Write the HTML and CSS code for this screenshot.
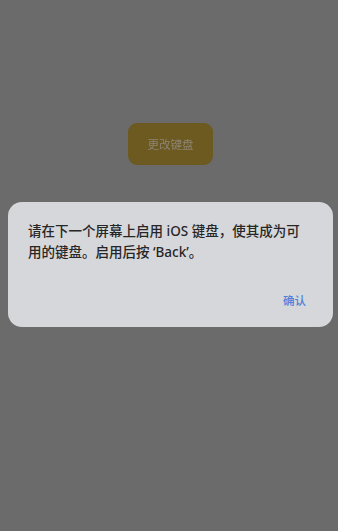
FILE: index.html
```html
<!DOCTYPE html>
<html lang="zh">
<head>
<meta charset="utf-8">
<link rel="stylesheet" href="styles.css">
</head>
<body>
<div class="screen">
  <div class="change-btn">更改键盘</div>
  <div class="dialog">
    <p class="msg">请在下一个屏幕上启用 iOS 键盘，使其成为可用的键盘。启用后按 ‘Back’。</p>
    <div class="actions"><span class="ok">确认</span></div>
  </div>
</div>
</body>
</html>
```
FILE: styles.css
```css
html, body {
  margin: 0;
  padding: 0;
}
body {
  background: #6b6b6b;
  font-family: "Noto Sans", "Noto Sans CJK SC", sans-serif;
}
.screen {
  width: 338px;
  height: 531px;
  display: flex;
  flex-direction: column;
  align-items: center;
  padding-top: 123px;
  box-sizing: border-box;
}
.change-btn {
  width: 85px;
  height: 42px;
  margin-left: 3px;
  border-radius: 9px;
  background: #6d5a20;
  color: #8c8372;
  font-size: 11.5px;
  display: flex;
  align-items: center;
  justify-content: center;
  filter: blur(0.4px);
}
.dialog {
  margin-top: 37px;
  width: 325px;
  height: 125px;
  margin-left: 3px;
  box-sizing: border-box;
  background: #d6d7db;
  border-radius: 14px;
  padding: 19px 20px 0 20px;
  display: flex;
  flex-direction: column;
}
.msg {
  margin: 0;
  font-size: 13.5px;
  line-height: 21px;
  font-weight: 500;
  color: #262626;
}
.actions {
  margin-top: auto;
  display: flex;
  justify-content: flex-end;
  padding: 0 7px 19px 0;
}
.ok {
  font-size: 11.5px;
  color: #4d7fd8;
  font-weight: 500;
}
```
